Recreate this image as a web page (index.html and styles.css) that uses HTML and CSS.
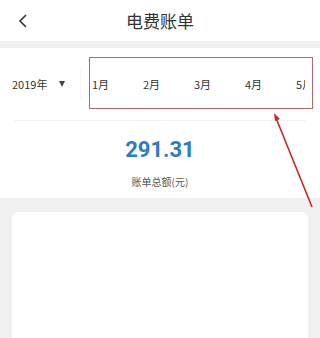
FILE: index.html
```html
<!DOCTYPE html>
<html lang="zh-CN">
<head>
    <meta charset="UTF-8">
    <meta name="viewport" content="width=device-width, initial-scale=1.0">
    <title>电费账单</title>
    <link rel="stylesheet" href="styles.css">
</head>
<body>
    <div class="header">
        <div class="back">
            <svg width="10" height="14" viewBox="0 0 10 14"><path d="M8 1 L2 7 L8 13" fill="none" stroke="#333" stroke-width="1.6"/></svg>
        </div>
        <div class="title">电费账单</div>
        <div class="spacer"></div>
    </div>

    <div class="summary">
        <div class="picker-row">
            <div class="year">
                <span>2019年</span>
                <span class="caret"></span>
            </div>
            <div class="months">
                <div class="month">1月</div>
                <div class="month">2月</div>
                <div class="month">3月</div>
                <div class="month">4月</div>
                <div class="month">5月</div>
            </div>
        </div>
        <div class="divider"></div>
        <div class="amount">291.31</div>
        <div class="amount-label">账单总额(元)</div>

        <!-- annotation -->
        <div class="mark-box"></div>
        <svg class="mark-arrow" width="50" height="100" viewBox="0 0 50 100">
            <path d="M4 6 L40 95" stroke="#c62828" stroke-width="1.6" fill="none"/>
            <path d="M2 1 L8 7 L3 9 Z" fill="#c62828"/>
        </svg>
    </div>

    <div class="card"></div>
</body>
</html>
```

FILE: styles.css
```css
body {
    margin: 0;
    background-color: #f0f0f0;
    font-family: "Noto Sans CJK SC", Roboto, sans-serif;
    color: #333;
    height: 338px;
    overflow: hidden;
}
.header {
    background-color: white;
    height: 41px;
    display: grid;
    grid-template-columns: 44px 1fr 44px;
    align-items: center;
}
.back {
    display: flex;
    justify-content: center;
    padding-left: 2px;
}
.title {
    text-align: center;
    font-size: 17px;
    color: #333;
}
.summary {
    position: relative;
    margin-top: 7px;
    background-color: white;
    height: 150px;
}
.picker-row {
    display: flex;
    align-items: center;
    height: 72px;
}
.year {
    width: 81px;
    box-sizing: border-box;
    padding-left: 12px;
    display: flex;
    align-items: center;
    font-size: 11px;
    border-right: 1px solid #f4f4f4;
    height: 30px;
}
.caret {
    margin-left: 12px;
    width: 0;
    height: 0;
    border-left: 3.5px solid transparent;
    border-right: 3.5px solid transparent;
    border-top: 6px solid #444;
}
.months {
    display: flex;
    margin-left: 11px;
    width: 213px;
    overflow: hidden;
}
.month {
    flex: 0 0 51px;
    font-size: 11px;
}
.divider {
    height: 1px;
    background-color: #f2f2f2;
    margin: 0 14px;
}
.amount {
    margin-top: 14px;
    text-align: center;
    font-family: Roboto, sans-serif;
    font-weight: bold;
    font-size: 22px;
    color: #2b7bc6;
    line-height: 30px;
}
.amount-label {
    margin-top: 9px;
    text-align: center;
    font-size: 10px;
    color: #555;
}
.mark-box {
    position: absolute;
    left: 89px;
    top: 9px;
    width: 222px;
    height: 50px;
    border: 1px solid #b06a6a;
}
.mark-arrow {
    position: absolute;
    left: 272px;
    top: 64px;
}
.card {
    margin: 14px 12px 0;
    height: 140px;
    background-color: white;
    border-radius: 6px;
}
```
